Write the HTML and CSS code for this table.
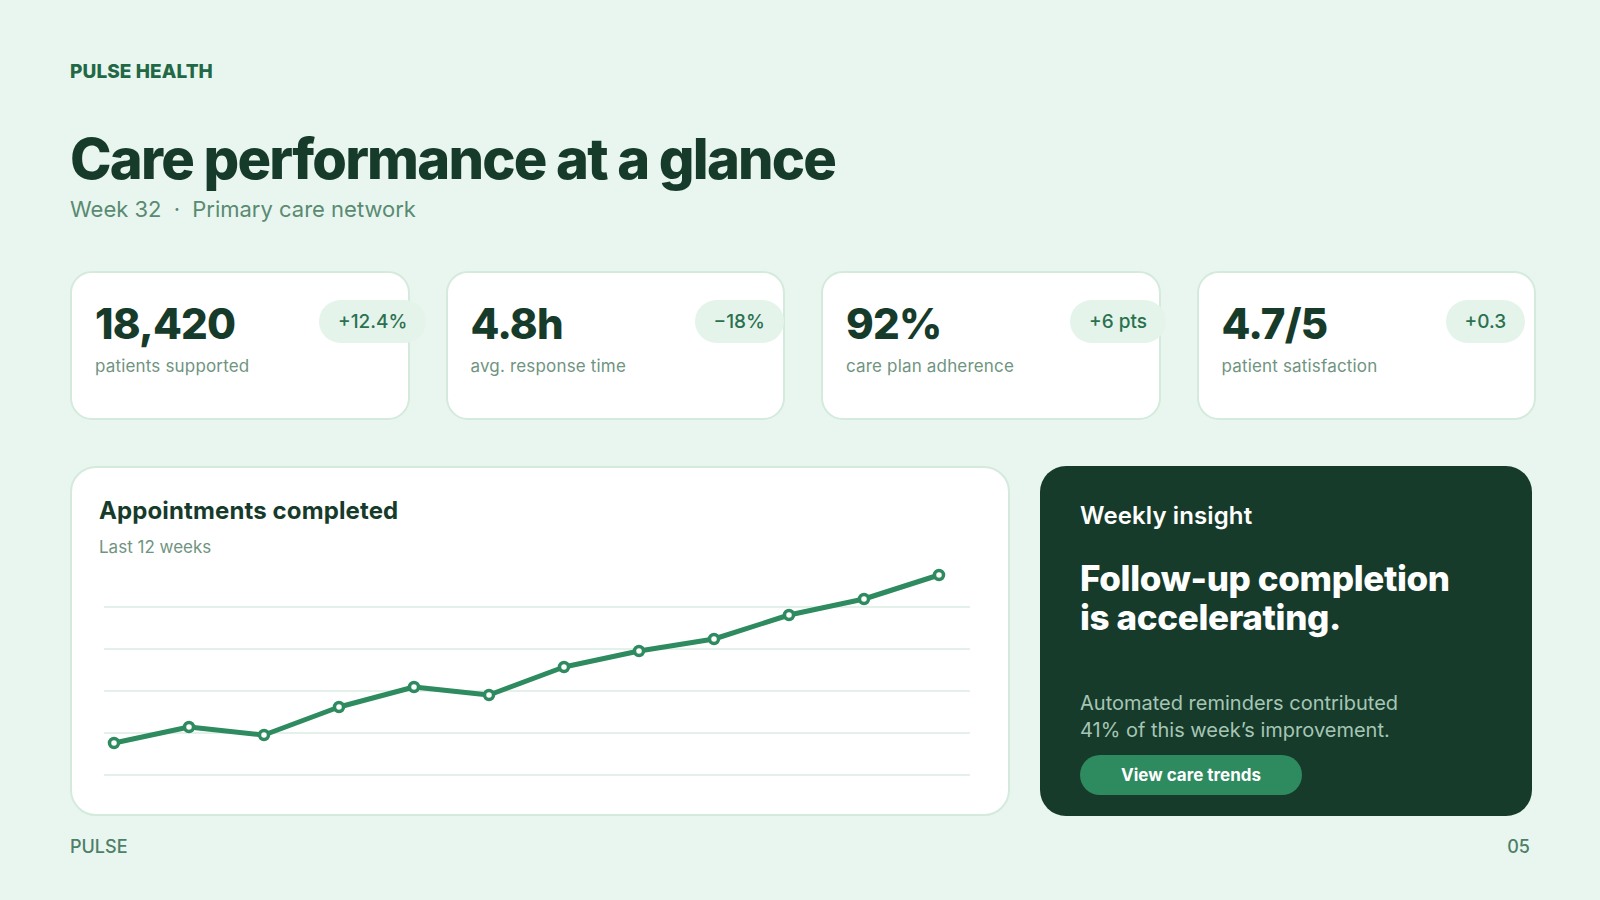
FILE: index.html
```html
<!DOCTYPE html>
<html lang="en">
<head>
<meta charset="utf-8">
<title>Pulse Health — Care performance</title>
<link rel="stylesheet" href="styles.css">
</head>
<body>
<div class="page">
  <div class="brand">PULSE HEALTH</div>
  <h1 class="title">Care performance at a glance</h1>
  <div class="subtitle">Week 32 <span class="dot">·</span> Primary care network</div>

  <div class="cards">
    <div class="card">
      <div class="card-main">
        <div class="value">18,420</div>
        <div class="label">patients supported</div>
      </div>
      <div class="badge">+12.4%</div>
    </div>
    <div class="card">
      <div class="card-main">
        <div class="value">4.8h</div>
        <div class="label">avg. response time</div>
      </div>
      <div class="badge">−18%</div>
    </div>
    <div class="card">
      <div class="card-main">
        <div class="value">92%</div>
        <div class="label">care plan adherence</div>
      </div>
      <div class="badge">+6 pts</div>
    </div>
    <div class="card">
      <div class="card-main">
        <div class="value">4.7/5</div>
        <div class="label">patient satisfaction</div>
      </div>
      <div class="badge">+0.3</div>
    </div>
  </div>

  <div class="bottom">
    <div class="chart-card">
      <div class="chart-title">Appointments completed</div>
      <div class="chart-sub">Last 12 weeks</div>
      <svg class="chart" width="880" height="230" viewBox="0 0 880 230">
        <g class="grid">
          <line x1="5" y1="46" x2="871" y2="46"/>
          <line x1="5" y1="88" x2="871" y2="88"/>
          <line x1="5" y1="130" x2="871" y2="130"/>
          <line x1="5" y1="172" x2="871" y2="172"/>
          <line x1="5" y1="214" x2="871" y2="214"/>
        </g>
        <polyline class="line" points="15,182 90,166 165,174 240,146 315,126 390,134 465,106 540,90 615,78 690,54 765,38 840,14"/>
        <g class="pts">
          <circle cx="15" cy="182" r="4.5"/>
          <circle cx="90" cy="166" r="4.5"/>
          <circle cx="165" cy="174" r="4.5"/>
          <circle cx="240" cy="146" r="4.5"/>
          <circle cx="315" cy="126" r="4.5"/>
          <circle cx="390" cy="134" r="4.5"/>
          <circle cx="465" cy="106" r="4.5"/>
          <circle cx="540" cy="90" r="4.5"/>
          <circle cx="615" cy="78" r="4.5"/>
          <circle cx="690" cy="54" r="4.5"/>
          <circle cx="765" cy="38" r="4.5"/>
          <circle cx="840" cy="14" r="4.5"/>
        </g>
      </svg>
    </div>
    <div class="insight">
      <div class="insight-kicker">Weekly insight</div>
      <div class="insight-head">Follow-up completion<br>is accelerating.</div>
      <div class="insight-body">Automated reminders contributed<br>41% of this week’s improvement.</div>
      <div class="btn">View care trends</div>
    </div>
  </div>

  <div class="footer">
    <span>PULSE</span>
    <span>05</span>
  </div>
</div>
</body>
</html>
```

FILE: styles.css
```css
* { box-sizing: border-box; }
html, body { margin: 0; padding: 0; }
body {
  background: #e9f6ef;
  font-family: Inter, "Noto Sans", "Liberation Sans", sans-serif;
  color: #173b2b;
}
.page {
  width: 1600px;
  height: 900px;
  padding: 61px 64px 0 70px;
  overflow: hidden;
}
.brand {
  font-size: 19px;
  line-height: 22px;
  font-weight: 800;
  color: #226846;
  letter-spacing: 0.005em;
}
.title {
  margin: 46px 0 0;
  font-size: 56px;
  line-height: 1.1;
  font-weight: 800;
  letter-spacing: -0.032em;
  color: #173b2b;
}
.subtitle {
  margin-top: 4px;
  font-size: 22px;
  line-height: 1.3;
  color: #5a8a72;
}
.subtitle .dot { margin: 0 6px; }

.cards {
  margin-top: 48px;
  display: grid;
  grid-template-columns: repeat(4, minmax(0, 1fr));
  column-gap: 36px;
}
.card {
  height: 149px;
  min-width: 0;
  background: #ffffff;
  border: 2px solid #d3eadd;
  border-radius: 22px;
  padding: 27px 23px;
  display: flex;
  align-items: flex-start;
}
.card-main {
  width: 224px;
  flex-shrink: 0;
}
.value {
  font-size: 42px;
  line-height: 1.1;
  font-weight: 800;
  letter-spacing: -0.02em;
  color: #173b2b;
  margin-top: 1px;
}
.label {
  margin-top: 8px;
  font-size: 17px;
  line-height: 1.3;
  letter-spacing: 0.01em;
  color: #6f9481;
}
.badge {
  flex-shrink: 0;
  height: 43px;
  padding: 0 19px;
  border-radius: 22px;
  background: #e4f4eb;
  color: #2b7150;
  font-size: 19px;
  font-weight: 500;
  display: flex;
  align-items: center;
  white-space: nowrap;
  position: relative;
}

.bottom {
  margin-top: 46px;
  display: grid;
  grid-template-columns: 940px 492px;
  column-gap: 30px;
  height: 350px;
}
.chart-card {
  background: #ffffff;
  border: 2px solid #d3eadd;
  border-radius: 26px;
  padding: 29px 28px 0 27px;
}
.chart-title {
  font-size: 24px;
  line-height: 1.2;
  font-weight: 700;
  letter-spacing: 0.005em;
  color: #173b2b;
}
.chart-sub {
  margin-top: 10px;
  font-size: 17px;
  line-height: 1.3;
  color: #6f9481;
}
.chart {
  display: block;
  margin-top: 3px;
  overflow: visible;
}
.grid line {
  stroke: #e4f1ea;
  stroke-width: 2;
}
.line {
  fill: none;
  stroke: #2e8a5f;
  stroke-width: 5;
  stroke-linejoin: round;
  stroke-linecap: round;
}
.pts circle {
  fill: #ffffff;
  stroke: #2e8a5f;
  stroke-width: 3.5;
}

.insight {
  background: #173b2b;
  border-radius: 26px;
  padding: 36px 40px 21px;
  display: flex;
  flex-direction: column;
  align-items: flex-start;
}
.insight-kicker {
  font-size: 24px;
  line-height: 1.2;
  font-weight: 600;
  color: #ffffff;
  letter-spacing: 0.005em;
}
.insight-head {
  margin-top: 28px;
  font-size: 35px;
  line-height: 39px;
  font-weight: 800;
  color: #ffffff;
  letter-spacing: -0.01em;
}
.insight-body {
  margin-top: auto;
  font-size: 20px;
  line-height: 27.7px;
  color: #a6c6b5;
}
.btn {
  margin-top: 10px;
  height: 40px;
  padding: 0 41px;
  border-radius: 20px;
  background: #2e8a5f;
  color: #ffffff;
  font-size: 17px;
  font-weight: 700;
  display: flex;
  align-items: center;
}

.footer {
  margin-top: 20px;
  display: flex;
  justify-content: space-between;
  padding-right: 6px;
  font-size: 18px;
  line-height: 1.2;
  font-weight: 500;
  color: #4e7f68;
}
```
